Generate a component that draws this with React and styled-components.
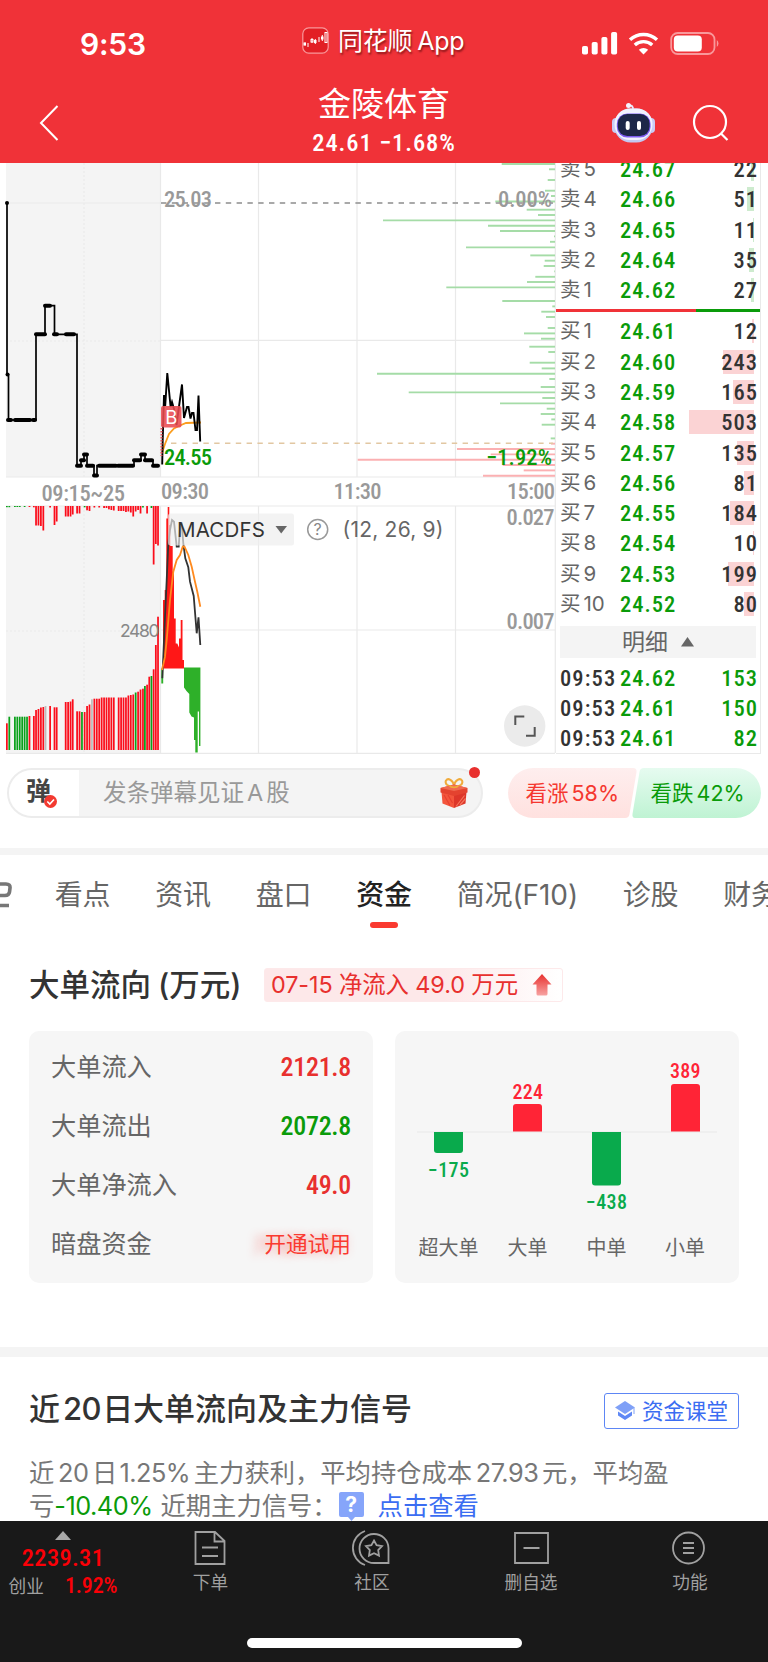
import React from "react";
import styled, { createGlobalStyle } from "styled-components";

const num = `Roboto, "Noto Sans CJK SC", sans-serif`;
const cjk = `Inter, "Noto Sans CJK SC", sans-serif`;

const GREEN = "#0a9b0a";
const RED = "#e8302e";

const sells = [
	["卖", 5, "24.67", 22],
	["卖", 4, "24.66", 51],
	["卖", 3, "24.65", 11],
	["卖", 2, "24.64", 35],
	["卖", 1, "24.62", 27],
];

const buys = [
	["买", 1, "24.61", 12],
	["买", 2, "24.60", 243],
	["买", 3, "24.59", 165],
	["买", 4, "24.58", 503],
	["买", 5, "24.57", 135],
	["买", 6, "24.56", 81],
	["买", 7, "24.55", 184],
	["买", 8, "24.54", 10],
	["买", 9, "24.53", 199],
	["买", 10, "24.52", 80],
];

const deals = [
	["09:53", "24.62", 153],
	["09:53", "24.61", 150],
	["09:53", "24.61", 82],
];

const flows = [
	{ label: "大单流入", value: "2121.8", color: RED },
	{ label: "大单流出", value: "2072.8", color: GREEN },
	{ label: "大单净流入", value: "49.0", color: RED },
];

// [y, left edge] of the chip distribution bars
const chipsGreen = [
	[164, 501.7], [169.3, 549], [180, 547.7], [190.7, 545], [196, 551], [201.5, 495.3],
	[209.7, 526.7], [215, 538], [220.4, 383], [225.7, 488], [231, 500], [236.4, 554],
	[241.8, 550], [247.4, 466], [255.4, 530.3], [260.7, 544.7], [266, 543.7], [271.4, 554.3],
	[276.8, 535.3], [282, 527], [287.4, 446.3], [301, 502.3], [306.4, 552.3], [311.7, 541.3],
	[317, 546], [328, 547.7], [333.4, 524], [338.7, 541], [346.7, 529.3], [352, 548.3],
	[362.7, 529.7], [368.4, 541.7], [373.7, 377], [379, 549.3], [387, 540.7], [392.4, 408.7],
	[398, 542.3], [403.4, 500], [408.7, 546.7], [414, 540.7], [419.4, 551.3], [424.7, 541.7],
	[438.4, 550.7],
];
const chipsRed = [
	[443.7, 551], [449, 457], [454.4, 490.7], [459.7, 357.7], [465, 502.7], [470.4, 523.7], [475.7, 483],
];

// auction volume: [slot, top, colour]
const auction = [
	[0, 723.3, "r"], [1, 716.7, "g"], [3.3, 716.7, "g"], [4.3, 716.7, "g"], [5.3, 716.7, "g"],
	[6.3, 716.7, "g"], [7.3, 716.7, "g"], [8.3, 716.7, "g"], [9.3, 716, "r"], [11.1, 716, "r"],
	[12, 710, "r"], [13, 709, "r"], [14, 707.5, "r"], [15, 707, "r"], [15.9, 706, "x"],
	[17.8, 706, "r"], [19.6, 707.3, "r"], [20.5, 707.3, "r"], [24.2, 702, "r"], [25.2, 702, "r"],
	[26.2, 701.5, "r"], [27.1, 699.3, "r"], [28.9, 711.3, "r"], [29.9, 711.3, "r"], [30.9, 712, "g"],
	[32, 712, "r"], [33, 706, "r"], [34, 704.5, "r"], [35, 699.3, "x"], [36, 698.7, "r"],
	[37, 698.7, "r"], [38, 698.7, "r"], [39, 697.5, "r"], [40, 697.5, "r"], [41, 697.5, "r"],
	[42, 697.5, "r"], [43, 697.5, "r"], [44, 697.5, "r"], [46, 697.5, "r"], [47, 697.5, "r"],
	[48, 697.5, "r"], [49, 697.5, "r"], [50, 695.5, "r"], [51, 695, "r"], [52, 694.5, "r"],
	[53, 692.5, "g"], [54, 691.7, "r"], [55, 689.5, "r"], [56, 688.7, "r"], [56.8, 686, "g"],
	[57.7, 684.7, "r"], [58.6, 676.7, "r"], [59.5, 676, "g"], [60.4, 669.3, "r"], [61.3, 645, "r"],
	[62.2, 616.7, "r"],
];
const auctionTop = [
	[0, 507.2, "g"], [1, 507.2, "g"], [3.3, 507, "g"], [4.3, 507, "g"], [5.3, 507, "g"], [7.3, 507, "g"],
	[9.3, 507, "r"], [11.1, 507.3, "r"], [12, 525.5, "r"], [13, 525.5, "r"], [14, 526, "r"], [15, 530.5, "r"],
	[17.8, 507.5, "r"], [19.6, 525, "r"], [20.5, 521.5, "r"], [24.2, 516.5, "r"], [25.2, 516.5, "r"],
	[26.2, 516.5, "r"], [27.1, 514.5, "r"], [28.9, 513.5, "r"], [29.9, 513.5, "r"], [32, 507.3, "g"],
	[33, 510.3, "r"], [34, 511, "r"], [36, 507.5, "r"], [38, 507.5, "r"], [40, 508, "r"], [41, 508, "r"],
	[42, 509.3, "r"], [43, 510, "r"], [44, 510.5, "r"], [46, 511, "r"], [47, 511, "r"], [48, 511, "r"],
	[49, 512, "r"], [50, 511.5, "r"], [51, 512.5, "r"], [52, 516.5, "r"], [53, 511.5, "r"], [54, 510, "r"],
	[55, 513.5, "r"], [56, 507.5, "g"], [57.7, 513.5, "r"], [59.5, 508, "g"], [60.4, 564.5, "r"],
	[61.3, 544, "r"], [62.2, 545.5, "r"],
];
const tone = { r: "#fb0d1b", g: "#0aa11a", x: "#bdbdbd" };

const flat = [
	[8, 11, 420], [15, 30, 420], [33, 35, 420], [36, 45, 334.3], [45, 50, 305.7], [54, 57, 334.3],
	[66, 74, 334.3], [77, 81, 465.7], [81, 84, 460.3], [84, 87, 454.5], [87, 93, 465.7], [94, 97, 475.5],
	[99, 116, 465.7], [118, 133, 465.7], [134, 140, 460.3], [141, 145, 454.5], [145, 152, 460.3],
	[153, 158, 465.7],
];

const MarketChart = () => (
	<ChartSvg viewBox="0 163 556 591">
		<rect x="6" y="163" width="154.5" height="314" fill="#f4f4f4" />
		<rect x="6" y="506" width="154.5" height="247.5" fill="#f4f4f4" />
		<g stroke="#e9e9e9" strokeWidth="1.2" fill="none">
			<path d="M6 477H555M6 506H555M6 753.3H555M161 340.3H555M161 630H555M6 203H160" />
			<path d="M160.5 163V477M258.5 163V477M357 163V477M455.5 163V477M555.3 163V753" />
			<path d="M160.5 506V753M258.5 506V753M357 506V753M455.5 506V753" />
			<path d="M84 163V477M84 506V753M6 341H160M6 631H160" strokeDasharray="2 2" />
		</g>
		<g stroke="#a5dca7" strokeWidth="1.9">
			{chipsGreen.map(([y, x]) => (
				<line key={y} x1={x} x2="555" y1={y} y2={y} />
			))}
		</g>
		<g stroke="#fbb0b2" strokeWidth="1.9">
			{chipsRed.map(([y, x]) => (
				<line key={y} x1={x} x2="555" y1={y} y2={y} />
			))}
		</g>
		<path d="M161 203H553" stroke="#a9a9a9" strokeWidth="1.8" strokeDasharray="5.4 5.4" />
		<path d="M171 443.3H553" stroke="#e2c7a2" strokeWidth="1.4" strokeDasharray="5.4 5.4" />

		<path
			d="M7 203V374.5H8.5V420H36V334.3H45V305.7H54.5V334.3H77V465.7H81V460.3H84V454.5H87V465.7H94V475.5H97V465.7H134V460.3H141V454.5H145V460.3H153V465.7H158"
			fill="none"
			stroke="#000"
			strokeWidth="1.7"
		/>
		<g stroke="#000" strokeWidth="4" strokeLinecap="round">
			{flat.map(([a, b, y]) => (
				<line key={a + "-" + y} x1={a} x2={b} y1={y} y2={y} />
			))}
		</g>
		<circle cx="7" cy="203" r="2" />
		<circle cx="7.5" cy="374.5" r="2" />
		<path d="M162 453L165 444L169 434L174 428.5L180 425.5L186 423L201 422.5" fill="none" stroke="#fb9d1e" strokeWidth="1.8" />
		<path
			d="M162.2 464.5L162.7 440L164 395L165.2 406L167.3 373L170.6 407L172 402L174 409L176.5 425L182 384.5L184 418L187 407H188.5L190.5 418.5L192 413H193.5L195.5 430H197L198.5 395.5L200.2 441.5"
			fill="none"
			stroke="#000"
			strokeWidth="1.9"
		/>
		<path d="M161.5 428V456" stroke="#e8555a" strokeWidth="2" strokeDasharray="1.5 1.5" />
		<rect x="161" y="406" width="20.5" height="21.5" rx="2" fill="#e94b50" fillOpacity=".88" />
		<ChartText x="171.2" y="424" $size={18.5} fill="#fff" textAnchor="middle" $sans>B</ChartText>

		<ChartText x="164" y="207" $size={22.5} textLength="48" fill="#999">25.03</ChartText>
		<ChartText x="498" y="207" $size={22.5} textLength="54" fill="#999">0.00%</ChartText>
		<ChartText x="164" y="464.5" $size={22.5} textLength="48" fill={GREEN}>24.55</ChartText>
		<ChartText x="486" y="464.5" $size={22.5} textLength="66" fill={GREEN}>−1.92%</ChartText>
		<ChartText x="41.5" y="500.5" $size={22.5} textLength="83.5" fill="#999">09:15~25</ChartText>
		<ChartText x="161" y="498.5" $size={22.5} textLength="48" fill="#999">09:30</ChartText>
		<ChartText x="333.5" y="498.5" $size={22.5} textLength="48" fill="#999">11:30</ChartText>
		<ChartText x="507" y="498.5" $size={22.5} textLength="48" fill="#999">15:00</ChartText>

		{auction.map(([i, y, c]) => (
			<rect key={i} x={6 + i * 2.43} y={y} width="1.75" height={750 - y} fill={tone[c]} />
		))}
		{auctionTop.map(([i, y, c]) => (
			<rect key={i} x={6 + i * 2.43} y="506" width="1.75" height={y - 506} fill={tone[c]} />
		))}
		<path
			d="M163 668.5V600H164.7V590H166.3V518.5H167.7V507H169.3V525H170.3V546H172.7V571.5H174V618.5H175.7V643.5H177.3L179 647.5V638.5H180.7V620H182.5V660H184V668.5Z"
			fill="#ff1717"
		/>
		<path
			d="M184 667.5H200.4V746H199V711.5H197.7V752.5H195.3V740H194V717.5L191.5 716.5L189.3 712.5V694L186.5 691L184 687.5Z"
			fill="#2eb029"
		/>
		<path d="M161.3 668.5H163.2V683.5H161.3Z" fill="#2eb029" />
		<ChartText x="120" y="636.8" $size={17.5} textLength="39.5" fill="#888" $sans>2480</ChartText>
		<path
			d="M162.3 678.3L163.3 656.7L165 616.7L166.7 580L168.3 543.3L170 530L172 520L174 521.7L176.7 546.7H178.7L180.3 523.3H181.7L183.3 543.3L185.3 558.3L188.3 567.3L190 581.7L193.7 596L196.7 633.3L198.5 617.3L200.3 645"
			fill="none"
			stroke="#333"
			strokeWidth="1.8"
		/>
		<rect x="168" y="513.5" width="126" height="32" rx="2.5" fill="#eee" fillOpacity=".68" />
		<path
			d="M162 670L165 656.7L166.7 640L170 600L173.3 571.7L176.7 560L180 555L182.7 546.7H184.5L188.3 555L191.7 566.7L195 581.7L197.3 591.7L200.3 606.7"
			fill="none"
			stroke="#ff8a1f"
			strokeWidth="1.8"
		/>
		<ChartText x="177" y="537" $size={20.5} textLength="88" fill="#333" $sans>MACDFS</ChartText>
		<path d="M275.5 526H287L281.2 533.5Z" fill="#666" />
		<circle cx="317.7" cy="529.5" r="10" fill="none" stroke="#999" strokeWidth="1.5" />
		<ChartText x="317.7" y="535.2" $size={16} fill="#888" textAnchor="middle" $sans>?</ChartText>
		<ChartText x="342.5" y="536.5" $size={21} textLength="101" fill="#666" $sans>(12, 26, 9)</ChartText>
		<ChartText x="506.5" y="524.8" $size={22.5} textLength="48" fill="#999">0.027</ChartText>
		<ChartText x="506.5" y="629" $size={22.5} textLength="48" fill="#999">0.007</ChartText>
		<circle cx="524.7" cy="726" r="20.7" fill="#ebebeb" />
		<path d="M515.3 725V716.5H524.3M526 735.7H534.7V727" fill="none" stroke="#555" strokeWidth="2" />
	</ChartSvg>
);

const OrderRow = ({ order: [side, level, price, volume] }) => (
	<BookRow>
		<Level>
			{side}
			<span>{level}</span>
		</Level>
		<Price>{price}</Price>
		<Volume>
			<VolumeBar $buy={side === "买"} style={{ width: (volume * 65) / 503 }} />
			<span>{volume}</span>
		</Volume>
	</BookRow>
);

const RobotIcon = () => (
	<svg width="46" height="42" viewBox="0 0 46 42">
		<path d="M22 8C22.5 4.5 20.5 3 18 3.5" fill="none" stroke="#e9e9fb" strokeWidth="1.8" />
		<circle cx="17.5" cy="3.5" r="2.5" fill="#f4f4ff" />
		<rect x="1" y="16" width="8" height="15" rx="4" fill="#c9ccf5" />
		<rect x="36" y="16" width="8" height="15" rx="4" fill="#c9ccf5" />
		<rect x="3.5" y="6.5" width="38" height="34" rx="16" fill="#c3c8f2" />
		<rect x="3.5" y="6.5" width="38" height="31.5" rx="15.5" fill="#f1f2fe" />
		<rect x="5.8" y="11.5" width="33.8" height="24" rx="10.5" fill="#7d5cf0" />
		<rect x="6.8" y="12" width="31.8" height="22" rx="9.5" fill="#1d2748" />
		<rect x="14.7" y="19" width="4" height="9" rx="2" fill="#fff" />
		<rect x="26" y="19" width="4" height="9" rx="2" fill="#fff" />
	</svg>
);

const GiftIcon = () => (
	<svg width="28" height="32" viewBox="0 0 28 32">
		<path d="M14 9.5C8 10 4.5 7 6 3.5C8 .5 13 3 14 8.5C15 3 20 .5 22 3.5C23.5 7 20 10 14 9.5" fill="none" stroke="#f0ab3c" strokeWidth="2" />
		<path d="M1.5 15L14 18V31L2.5 26.5Z" fill="#f3553c" />
		<path d="M26.5 15L14 18V31L25.5 26.5Z" fill="#dd3629" />
		<path d="M16 29.5L24.5 18.5M20 28L25.5 21.5" stroke="#f4745c" strokeWidth="1.2" />
		<path d="M4 18L10 28.5M8 18L12.5 26" stroke="#e8402f" strokeWidth="1.2" />
		<path d="M.5 11L14 7.5L27.5 11V15.5L14 19L.5 15.5Z" fill="#e4432f" />
		<path d="M.5 11L14 7.5L27.5 11L14 14Z" fill="#f06a50" />
		<path d="M9.5 8.5C11 11 17 11 18.5 8.5" fill="none" stroke="#f0ab3c" strokeWidth="1.6" />
	</svg>
);

const NavIcon = ({ name }) => (
	<svg width="40" height="36" viewBox="0 0 40 36" fill="none" stroke="#a0a0a0" strokeWidth="1.8">
		{name === "order" && (
			<path d="M4.5 2H24L33.5 11V34H4.5ZM23.5 2.5V11.5H33M11 17.5H27M11 26H27" />
		)}
		{name === "community" && (
			<>
				<path d="M36.5 33V18A14.5 14.5 0 1 0 22 33Z" />
				<path d="M13 1A18 18 0 0 0 13 35" />
				<path d="M22 10.5L24.6 15.2L30 16.2L26.2 20.1L27 25.6L22 23.2L17 25.6L17.8 20.1L14 16.2L19.4 15.2Z" />
			</>
		)}
		{name === "remove" && <path d="M4 3H37V33H4ZM12.5 18H28.5" />}
		{name === "more" && (
			<>
				<circle cx="18.5" cy="18" r="15.5" />
				<path d="M13 13H24M13 18H24M13 23H24" />
			</>
		)}
	</svg>
);

const App = () => {
	return (
		<Page>
			<GlobalStyle />
			<Header>
				<StatusBar>
					<Clock>9:53</Clock>
					<Brand>
						<svg width="27" height="27" viewBox="0 0 27 27">
							<rect x=".8" y=".8" width="25.4" height="25.4" rx="6" fill="#e21f25" stroke="#f9989b" strokeWidth="1.2" />
							<g stroke="#fff" strokeWidth="1" fill="none">
								<path d="M3 15.5V18.5M6 16V20M10 11V16M13.3 12V17M17 10V15M20.3 8V14" />
								<path d="M1.5 17H4M12 14.5H14.5M19 11H21.5" strokeWidth="3" />
								<rect x="9" y="12.5" width="2" height="2.5" />
								<rect x="23" y="5.5" width="2" height="10" />
							</g>
						</svg>
						<span>同花顺 App</span>
					</Brand>
					<StatusIcons>
						<svg width="138" height="24" viewBox="0 0 138 24">
							<g fill="#fff">
								<rect x="0" y="14" width="6" height="8.5" rx="1.8" />
								<rect x="9.7" y="10" width="6" height="12.5" rx="1.8" />
								<rect x="19.4" y="5" width="6" height="17.5" rx="1.8" />
								<rect x="29.1" y="0" width="6" height="22.5" rx="1.8" />
								<path d="M61.5 22.5L56.8 17.8A7 7 0 0 1 66.2 17.8Z" />
							</g>
							<g fill="none" stroke="#fff" strokeWidth="3.4">
								<path d="M52.8 13A13 13 0 0 1 70.2 13" />
								<path d="M48 7.8A20 20 0 0 1 75 7.8" />
							</g>
							<rect x="89.2" y="1" width="43.3" height="21" rx="6.5" fill="none" stroke="#f9989b" strokeWidth="1.8" />
							<rect x="91.8" y="3.4" width="28" height="16.2" rx="4" fill="#fff" />
							<path d="M134.8 8A4.5 4.5 0 0 1 134.8 15Z" fill="#f9989b" />
						</svg>
					</StatusIcons>
				</StatusBar>
				<TitleBar>
					<Back>
						<svg width="20" height="36" viewBox="0 0 20 36">
							<path d="M18.5 1L2 18L18.5 35" fill="none" stroke="#fff" strokeWidth="2" />
						</svg>
					</Back>
					<Stock>
						<h1>金陵体育</h1>
						<p>24.61 −1.68%</p>
					</Stock>
					<Tools>
						<RobotIcon />
						<svg width="38" height="38" viewBox="0 0 38 38" fill="none" stroke="#fff" strokeWidth="2.2">
							<circle cx="18" cy="18" r="16" />
							<path d="M29 29.5L35.5 36" />
						</svg>
					</Tools>
				</TitleBar>
			</Header>

			<Market>
				<MarketChart />
				<Book>
					<Rows $top="-9px">
						{sells.map((order) => (
							<OrderRow key={order[1]} order={order} />
						))}
					</Rows>
					<Ratio />
					<Rows $top="4.2px">
						{buys.map((order) => (
							<OrderRow key={order[1]} order={order} />
						))}
					</Rows>
					<DetailBar>
						明细
						<svg width="13" height="10" viewBox="0 0 13 10">
							<path d="M6.5 0L13 9.5H0Z" fill="#666" />
						</svg>
					</DetailBar>
					<Rows $top="4.6px">
						{deals.map(([time, price, volume], i) => (
							<BookRow key={i}>
								<Time>{time}</Time>
								<Price>{price}</Price>
								<Volume $green>
									<span>{volume}</span>
								</Volume>
							</BookRow>
						))}
					</Rows>
				</Book>
			</Market>

			<DanmuRow>
				<DanmuInput>
					<DanmuSwitch>
						弹
						<svg width="13" height="13" viewBox="0 0 13 13">
							<circle cx="6.5" cy="6.5" r="6.5" fill="#f33a30" />
							<path d="M3.3 6.5L5.8 9L10 4.5" fill="none" stroke="#fff" strokeWidth="1.6" />
						</svg>
					</DanmuSwitch>
					<Placeholder>
						发条弹幕见证<span>A</span>股
					</Placeholder>
					<GiftIcon />
					<Dot />
				</DanmuInput>
				<Votes>
					<svg width="253" height="50" viewBox="0 0 253 50">
						<defs>
							<linearGradient id="up" x1="0" y1="0" x2="0" y2="1">
								<stop offset="0" stopColor="#feeeee" />
								<stop offset="1" stopColor="#ffe1df" />
							</linearGradient>
							<linearGradient id="down" x1="0" y1="0" x2="0" y2="1">
								<stop offset="0" stopColor="#e6fbf0" />
								<stop offset="1" stopColor="#bff3d3" />
							</linearGradient>
						</defs>
						<path d="M25 0H125Q129 0 128.5 4L121.5 46Q121 50 117 50H25A25 25 0 0 1 25 0Z" fill="url(#up)" />
						<path d="M136 0H228A25 25 0 0 1 228 50H127Q124 50 124.5 46L131.5 4Q132 0 136 0Z" fill="url(#down)" />
					</svg>
					<VoteText $color="#f5372f">看涨<span>58%</span></VoteText>
					<VoteText $color={GREEN}>看跌<span>42%</span></VoteText>
				</Votes>
			</DanmuRow>

			<Band $h="7px" />

			<Tabs>
				<svg width="12" height="26" viewBox="0 0 12 26">
					<path d="M0 2H6Q10.5 2 10 6L9.5 10Q9 13.5 5 13.5H0M0 23.5H9" fill="none" stroke="#777" strokeWidth="3.6" />
				</svg>
				<Tab>看点</Tab>
				<Tab>资讯</Tab>
				<Tab>盘口</Tab>
				<Tab $active>资金</Tab>
				<Tab>简况(F10)</Tab>
				<Tab>诊股</Tab>
				<Tab>财务</Tab>
			</Tabs>

			<FlowSection>
				<FlowHead>
					<h2>
						大单流向<span>(万元)</span>
					</h2>
					<NetBadge>
						07-15 净流入 49.0 万元
						<svg width="20" height="22" viewBox="0 0 20 22">
							<defs>
								<linearGradient id="arrow" x1="0" y1="0" x2="0" y2="1">
									<stop offset="0" stopColor="#e8302e" />
									<stop offset="1" stopColor="#f7a3a2" />
								</linearGradient>
							</defs>
							<path d="M10 0L19.5 10.5H15.5V20Q15.5 21.5 14 21.5H6Q4.5 21.5 4.5 20V10.5H.5Z" fill="url(#arrow)" />
						</svg>
					</NetBadge>
				</FlowHead>
				<Cards>
					<FlowCard>
						{flows.map((f) => (
							<FlowRow key={f.label}>
								<span>{f.label}</span>
								<FlowValue $color={f.color}>{f.value}</FlowValue>
							</FlowRow>
						))}
						<FlowRow>
							<span>暗盘资金</span>
							<Trial>开通试用</Trial>
						</FlowRow>
					</FlowCard>
					<BarCard>
						<svg width="344" height="251" viewBox="395 1031 344 251">
							<path d="M417 1132H717" stroke="#ececec" strokeWidth="1.5" />
							<path d="M434 1132H463V1150Q463 1153 460 1153H437Q434 1153 434 1150Z" fill="#09aa4c" />
							<path d="M513 1131.5V1107Q513 1104 516 1104H539Q542 1104 542 1107V1131.5Z" fill="#ff2436" />
							<path d="M592 1132H621V1182.5Q621 1185.5 618 1185.5H595Q592 1185.5 592 1182.5Z" fill="#09aa4c" />
							<path d="M671 1131.5V1087Q671 1084 674 1084H697Q700 1084 700 1087V1131.5Z" fill="#ff2436" />
							<ChartText x="428" y="1176.5" $size={20} textLength="41" fill="#09aa4c">−175</ChartText>
							<ChartText x="512.5" y="1098.5" $size={20} textLength="30.5" fill="#ff2436">224</ChartText>
							<ChartText x="586" y="1208.5" $size={20} textLength="41" fill="#09aa4c">−438</ChartText>
							<ChartText x="670" y="1078" $size={20} textLength="30.5" fill="#ff2436">389</ChartText>
							<ChartText x="448.5" y="1254.5" $size={20} textAnchor="middle" fill="#666" $sans>超大单</ChartText>
							<ChartText x="527.5" y="1254.5" $size={20} textAnchor="middle" fill="#666" $sans>大单</ChartText>
							<ChartText x="606.5" y="1254.5" $size={20} textAnchor="middle" fill="#666" $sans>中单</ChartText>
							<ChartText x="685" y="1254.5" $size={20} textAnchor="middle" fill="#666" $sans>小单</ChartText>
						</svg>
					</BarCard>
				</Cards>
			</FlowSection>

			<Band $h="10px" />

			<SignalSection>
				<SignalHead>
					<h2>
						近<span>20</span>日大单流向及主力信号
					</h2>
					<ClassButton>
						<svg width="20" height="20" viewBox="0 0 20 20">
							<path d="M10 0L20 6.5L10 13L0 6.5Z" fill="#7fa0f7" />
							<path d="M3 10.5L10 15L17 10.5V14.5L10 19L3 14.5Z" fill="#5f88f5" />
							<path d="M19 7V13" stroke="#7fa0f7" strokeWidth="1" />
						</svg>
						资金课堂
					</ClassButton>
				</SignalHead>
				<Line>
					近<i>20</i>日<b>1.25%</b>主力获利，平均持仓成本<i>27.93</i>元，平均盈
				</Line>
				<Line>
					亏<Loss>-10.40%</Loss>近期主力信号：
					<Hint>
						<svg width="25" height="29" viewBox="0 0 25 29">
							<path d="M2 0H23Q25 0 25 2V23Q25 25 23 25H16L12.5 29L9 25H2Q0 25 0 23V2Q0 0 2 0Z" fill="#86a5fa" />
						</svg>
						<span>?</span>
					</Hint>
					<Link>点击查看</Link>
				</Line>
			</SignalSection>

			<BottomBar>
				<Nav>
					<Index>
						<svg width="16" height="9" viewBox="0 0 16 9">
							<path d="M8 0L16 9H0Z" fill="#a8a8a8" />
						</svg>
						<strong>2239.31</strong>
						<p>
							创业<em>1.92%</em>
						</p>
					</Index>
					<NavItem>
						<NavIcon name="order" />
						下单
					</NavItem>
					<NavItem>
						<NavIcon name="community" />
						社区
					</NavItem>
					<NavItem>
						<NavIcon name="remove" />
						删自选
					</NavItem>
					<NavItem>
						<NavIcon name="more" />
						功能
					</NavItem>
				</Nav>
				<HomeBar />
			</BottomBar>
		</Page>
	);
};

export default App;

const GlobalStyle = createGlobalStyle`
	* {
		box-sizing: border-box;
		margin: 0;
		padding: 0;
	}
	body {
		background: #fff;
	}
	svg {
		flex-shrink: 0;
		display: block;
	}
`;

const ChartSvg = styled.svg`
	width: 556px;
	height: 591px;
`;

const ChartText = styled.text`
	font-family: ${({ $sans }) => ($sans ? cjk : num)};
	font-size: ${({ $size }) => $size}px;
	font-weight: ${({ $sans }) => ($sans ? 400 : 500)};
	font-stretch: 75%;
`;

const Page = styled.div`
	width: 768px;
	height: 1662px;
	display: flex;
	flex-direction: column;
	overflow: hidden;
	background: #fff;
	font-family: ${cjk};
	color: #333;
	white-space: nowrap;
`;

const Header = styled.header`
	height: 163px;
	flex-shrink: 0;
	background: #f03238;
	color: #fff;
`;

const StatusBar = styled.div`
	height: 84px;
	display: grid;
	grid-template-columns: 226px 1fr 226px;
	align-items: center;
`;

const Clock = styled.div`
	padding: 4px 0 0 80px;
	font-size: 30px;
	line-height: 36px;
	font-weight: 600;
	letter-spacing: -0.2px;
`;

const Brand = styled.div`
	display: flex;
	align-items: center;
	padding-left: 76px;
	gap: 9px;
	margin-top: -3px;
	font-size: 25px;
	line-height: 30px;
	letter-spacing: -0.3px;
	word-spacing: -1.5px;
	text-shadow: 1px 2px 2px rgba(60, 0, 0, 0.55);
`;

const StatusIcons = styled.div`
	padding: 3px 0 0 40px;
`;

const TitleBar = styled.div`
	height: 79px;
	display: grid;
	grid-template-columns: 226px 1fr 226px;
`;

const Back = styled.div`
	padding: 21px 0 0 39px;
`;

const Stock = styled.div`
	text-align: center;
	h1 {
		font-size: 33px;
		font-weight: 400;
		line-height: 41px;
	}
	p {
		font-family: ${num};
		font-size: 24.5px;
		font-weight: 500;
		font-stretch: 75%;
		line-height: 36px;
		letter-spacing: 0.9px;
	}
`;

const Tools = styled.div`
	display: flex;
	align-items: center;
	padding: 0 0 1px 69px;
	gap: 35px;
`;

const Market = styled.section`
	height: 591px;
	display: flex;
	flex-shrink: 0;
`;

const Book = styled.div`
	width: 205px;
	height: 591px;
	overflow: hidden;
	border-right: 1.5px solid #e9e9e9;
	border-bottom: 1.5px solid #e9e9e9;
`;

const Rows = styled.div`
	margin-top: ${({ $top }) => $top};
`;

const BookRow = styled.div`
	height: 30.3px;
	display: grid;
	grid-template-columns: 60px 74px 1fr;
	align-items: center;
	padding: 0 2px 0 4px;
	font-family: ${num};
	font-size: 22.5px;
	font-weight: 500;
	font-stretch: 75%;
	line-height: 30px;
	letter-spacing: 1px;
`;

const Level = styled.div`
	font-family: ${cjk};
	font-size: 20.5px;
	font-weight: 400;
	letter-spacing: 0;
	color: #666;
	span {
		margin-left: 3px;
	}
`;

const Price = styled.div`
	color: ${GREEN};
`;

const Time = styled.div`
	letter-spacing: 1.1px;
`;

const Volume = styled.div`
	position: relative;
	text-align: right;
	color: ${({ $green }) => ($green ? GREEN : "#333")};
	span {
		position: relative;
	}
`;

const VolumeBar = styled.i`
	position: absolute;
	right: 4px;
	top: 3px;
	height: 24px;
	min-width: 1px;
	background: ${({ $buy }) => ($buy ? "#fbd3d4" : "#cdebce")};
`;

const Ratio = styled.div`
	height: 3px;
	margin-top: 3.5px;
	background: linear-gradient(90deg, #f03238 140px, ${GREEN} 140px);
`;

const DetailBar = styled.div`
	height: 32px;
	margin: 7px 4px 0 4px;
	display: flex;
	align-items: center;
	justify-content: center;
	gap: 13px;
	background: #f4f4f4;
	font-size: 23px;
	line-height: 32px;
	color: #666;
`;

const DanmuRow = styled.div`
	height: 94px;
	display: flex;
	flex-shrink: 0;
	padding: 14px 7px 0;
	justify-content: space-between;
`;

const DanmuInput = styled.div`
	position: relative;
	width: 476px;
	height: 50px;
	display: flex;
	align-items: center;
	border: 2px solid #ececec;
	border-radius: 25px;
	background: #f4f4f4;
`;

const DanmuSwitch = styled.div`
	position: relative;
	width: 70px;
	height: 46px;
	padding-left: 17px;
	border-radius: 23px 0 0 23px;
	background: #fff;
	font-size: 25px;
	font-weight: 700;
	line-height: 43px;
	color: #444;
	svg {
		position: absolute;
		left: 35px;
		top: 25px;
	}
`;

const Placeholder = styled.div`
	flex: 1;
	padding-left: 24px;
	font-size: 23.5px;
	line-height: 44px;
	color: #999;
	span {
		margin: 0 3px;
	}
	& + svg {
		margin-right: 13px;
	}
`;

const Dot = styled.i`
	position: absolute;
	right: 1px;
	top: -3px;
	width: 11px;
	height: 11px;
	border-radius: 50%;
	background: #e8302e;
`;

const Votes = styled.div`
	position: relative;
	width: 253px;
	height: 50px;
	display: grid;
	grid-template-columns: 125px 128px;
	svg {
		position: absolute;
		left: 0;
		top: 0;
	}
`;

const VoteText = styled.div`
	position: relative;
	padding-left: 17.5px;
	font-size: 21.5px;
	line-height: 50px;
	color: ${({ $color }) => $color};
	span {
		margin-left: 3px;
	}
`;

const Band = styled.div`
	height: ${({ $h }) => $h};
	flex-shrink: 0;
	background: #f4f4f4;
`;

const Tabs = styled.nav`
	height: 83px;
	display: flex;
	flex-shrink: 0;
	gap: 44.7px;
	svg {
		margin: 27px -2px 0 0;
	}
`;

const Tab = styled.div`
	flex-shrink: 0;
	font-size: 28px;
	line-height: 40px;
	padding-top: 20px;
	letter-spacing: -0.1px;
	font-weight: ${({ $active }) => ($active ? 500 : 400)};
	color: ${({ $active }) => ($active ? "#222" : "#666")};
	&::after {
		content: "";
		display: ${({ $active }) => ($active ? "block" : "none")};
		width: 28px;
		height: 6px;
		margin: 7px auto 0;
		border-radius: 3px;
		background: #fa3a30;
	}
`;

const FlowSection = styled.section`
	height: 409px;
	flex-shrink: 0;
	padding: 29px 29px 0;
`;

const FlowHead = styled.div`
	display: flex;
	align-items: center;
	gap: 23px;
	height: 35px;
	h2 {
		width: 212px;
		font-size: 30.5px;
		font-weight: 500;
		line-height: 35px;
		span {
			margin-left: 7px;
		}
	}
`;

const NetBadge = styled.div`
	width: 299px;
	height: 34px;
	display: flex;
	align-items: center;
	justify-content: space-between;
	padding: 0 10px 0 6px;
	border: 1px solid #fde9ea;
	border-radius: 3px;
	background: linear-gradient(90deg, #fde8e9 60%, #fff);
	font-size: 23.4px;
	line-height: 32px;
	letter-spacing: -0.1px;
	color: ${RED};
`;

const Cards = styled.div`
	display: grid;
	grid-template-columns: 344px 344px;
	gap: 22px;
	margin-top: 29px;
`;

const FlowCard = styled.div`
	height: 252px;
	padding: 6px 22px 0;
	border-radius: 10px;
	background: #f6f6f6;
`;

const BarCard = styled.div`
	height: 252px;
	border-radius: 10px;
	background: #f6f6f6;
`;

const FlowRow = styled.div`
	height: 59.2px;
	display: flex;
	align-items: center;
	justify-content: space-between;
	font-size: 25.2px;
	line-height: 34px;
	color: #666;
`;

const FlowValue = styled.div`
	font-family: ${num};
	font-size: 26px;
	font-weight: 550;
	font-stretch: 75%;
	letter-spacing: -0.3px;
	color: ${({ $color }) => $color};
`;

const Trial = styled.div`
	font-size: 21.7px;
	color: #fa3a30;
	text-shadow: -12px 1px 8px rgba(250, 58, 48, 0.35), 0 0 8px rgba(250, 58, 48, 0.2);
`;

const SignalSection = styled.section`
	height: 164px;
	flex-shrink: 0;
	padding: 36px 29px 0;
	overflow: hidden;
`;

const SignalHead = styled.div`
	display: flex;
	justify-content: space-between;
	height: 64px;
	h2 {
		font-size: 31px;
		font-weight: 500;
		line-height: 32px;
		span {
			margin: 0 1px 0 3px;
			letter-spacing: -0.5px;
		}
	}
`;

const ClassButton = styled.div`
	width: 135px;
	height: 36px;
	display: flex;
	align-items: center;
	padding-left: 10px;
	gap: 7px;
	border: 1.5px solid #5d86f5;
	border-radius: 3px;
	font-size: 21.5px;
	line-height: 32px;
	color: #3b6df2;
`;

const Line = styled.p`
	height: 32.5px;
	display: flex;
	font-size: 25.3px;
	line-height: 32px;
	color: #777;
	i,
	b {
		font-style: normal;
		font-weight: 400;
		letter-spacing: -0.5px;
		margin: 0 3.7px;
	}
	b {
		margin-left: 2px;
	}
`;

const Loss = styled.span`
	color: ${GREEN};
	letter-spacing: -0.5px;
	margin-right: 8px;
`;

const Hint = styled.span`
	position: relative;
	width: 25px;
	height: 29px;
	margin: 2px 14px 0 1px;
	span {
		position: absolute;
		inset: 0;
		text-align: center;
		font-size: 21px;
		font-weight: 700;
		line-height: 26px;
		color: #fff;
	}
`;

const Link = styled.span`
	color: #3b6df2;
`;

const BottomBar = styled.footer`
	height: 141px;
	flex-shrink: 0;
	background: #191919;
`;

const Nav = styled.div`
	height: 117px;
	display: grid;
	grid-template-columns: 130px 161px 162px 156px 162px;
	color: #a0a0a0;
`;

const Index = styled.div`
	display: flex;
	flex-direction: column;
	align-items: center;
	padding: 10px 4px 0 0;
	font-family: ${num};
	strong {
		margin-top: 4px;
		font-size: 24.5px;
		font-weight: 500;
		font-stretch: 75%;
		line-height: 28px;
		letter-spacing: 0.3px;
		color: #fb0007;
	}
	p {
		font-size: 17.7px;
		line-height: 27px;
	}
	em {
		margin-left: 21px;
		font-style: normal;
		font-size: 22px;
		font-weight: 500;
		font-stretch: 75%;
		letter-spacing: -0.1px;
		color: #fb0007;
	}
`;

const NavItem = styled.div`
	display: flex;
	flex-direction: column;
	align-items: center;
	padding-top: 9px;
	gap: 5px;
	font-size: 17.7px;
	line-height: 24px;
`;

const HomeBar = styled.div`
	width: 275px;
	height: 10px;
	margin: 0 auto;
	border-radius: 5px;
	background: #fff;
`;
